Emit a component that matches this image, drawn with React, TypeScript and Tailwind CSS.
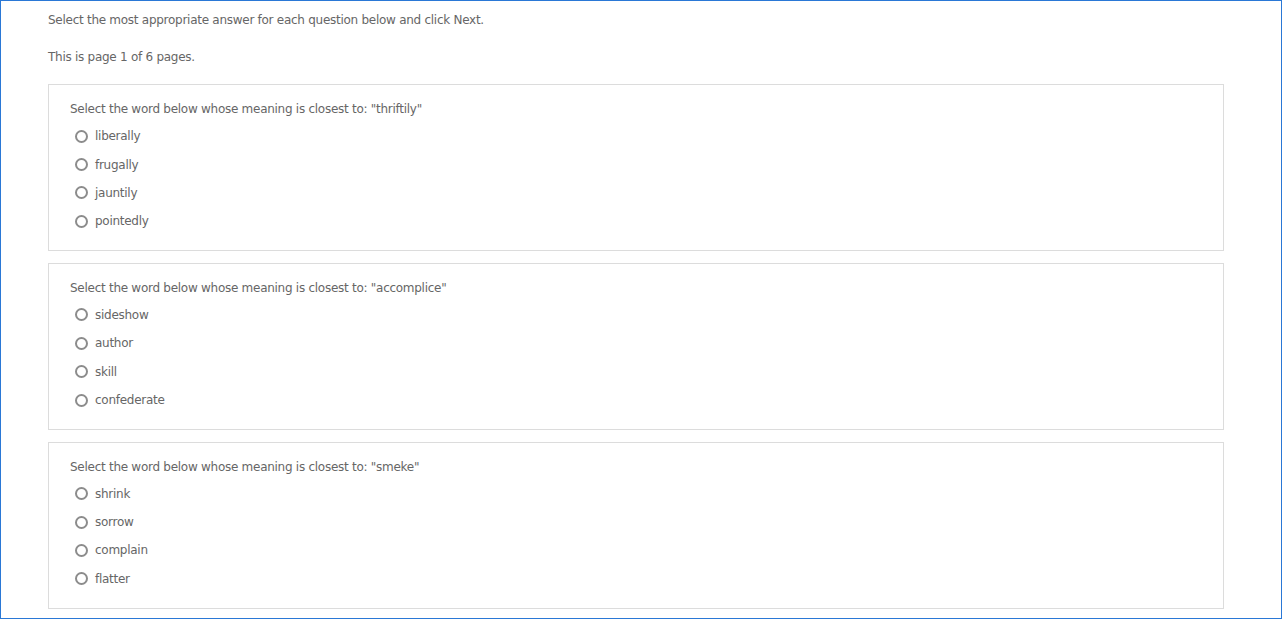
import React from "react";

const questions = [
  { word: "thriftily", options: ["liberally", "frugally", "jauntily", "pointedly"] },
  { word: "accomplice", options: ["sideshow", "author", "skill", "confederate"] },
  { word: "smeke", options: ["shrink", "sorrow", "complain", "flatter"] },
];

function Radio() {
  return <span className="inline-block w-[13px] h-[13px] rounded-full border-[2px] border-[#8c8c8c] bg-white shrink-0" />;
}

export default function App() {
  return (
    <div className="w-[1282px] h-[619px] overflow-hidden bg-white border border-[#2a78d6] text-[#666] text-[12px] tracking-[-0.27px] [font-family:'DejaVu_Sans',Verdana,sans-serif]">
      <div className="pl-[47px] pr-[57px] pt-[11px]">
        <p className="leading-[16px]">Select the most appropriate answer for each question below and click Next.</p>
        <p className="leading-[16px] mt-[21px]">This is page 1 of 6 pages.</p>
        <div className="mt-[19px] flex flex-col gap-[11.75px]">
          {questions.map((q) => (
            <div key={q.word} className="border border-[#dcdcdc] h-[167px] pl-[21px] pt-[16px]">
              <p className="leading-[16px]">Select the word below whose meaning is closest to: "{q.word}"</p>
              <div className="mt-[5px] flex flex-col">
                {q.options.map((o) => (
                  <label key={o} className="flex items-center h-[28.4px] pl-[5px] gap-[7px]">
                    <Radio />
                    <span>{o}</span>
                  </label>
                ))}
              </div>
            </div>
          ))}
        </div>
      </div>
    </div>
  );
}
